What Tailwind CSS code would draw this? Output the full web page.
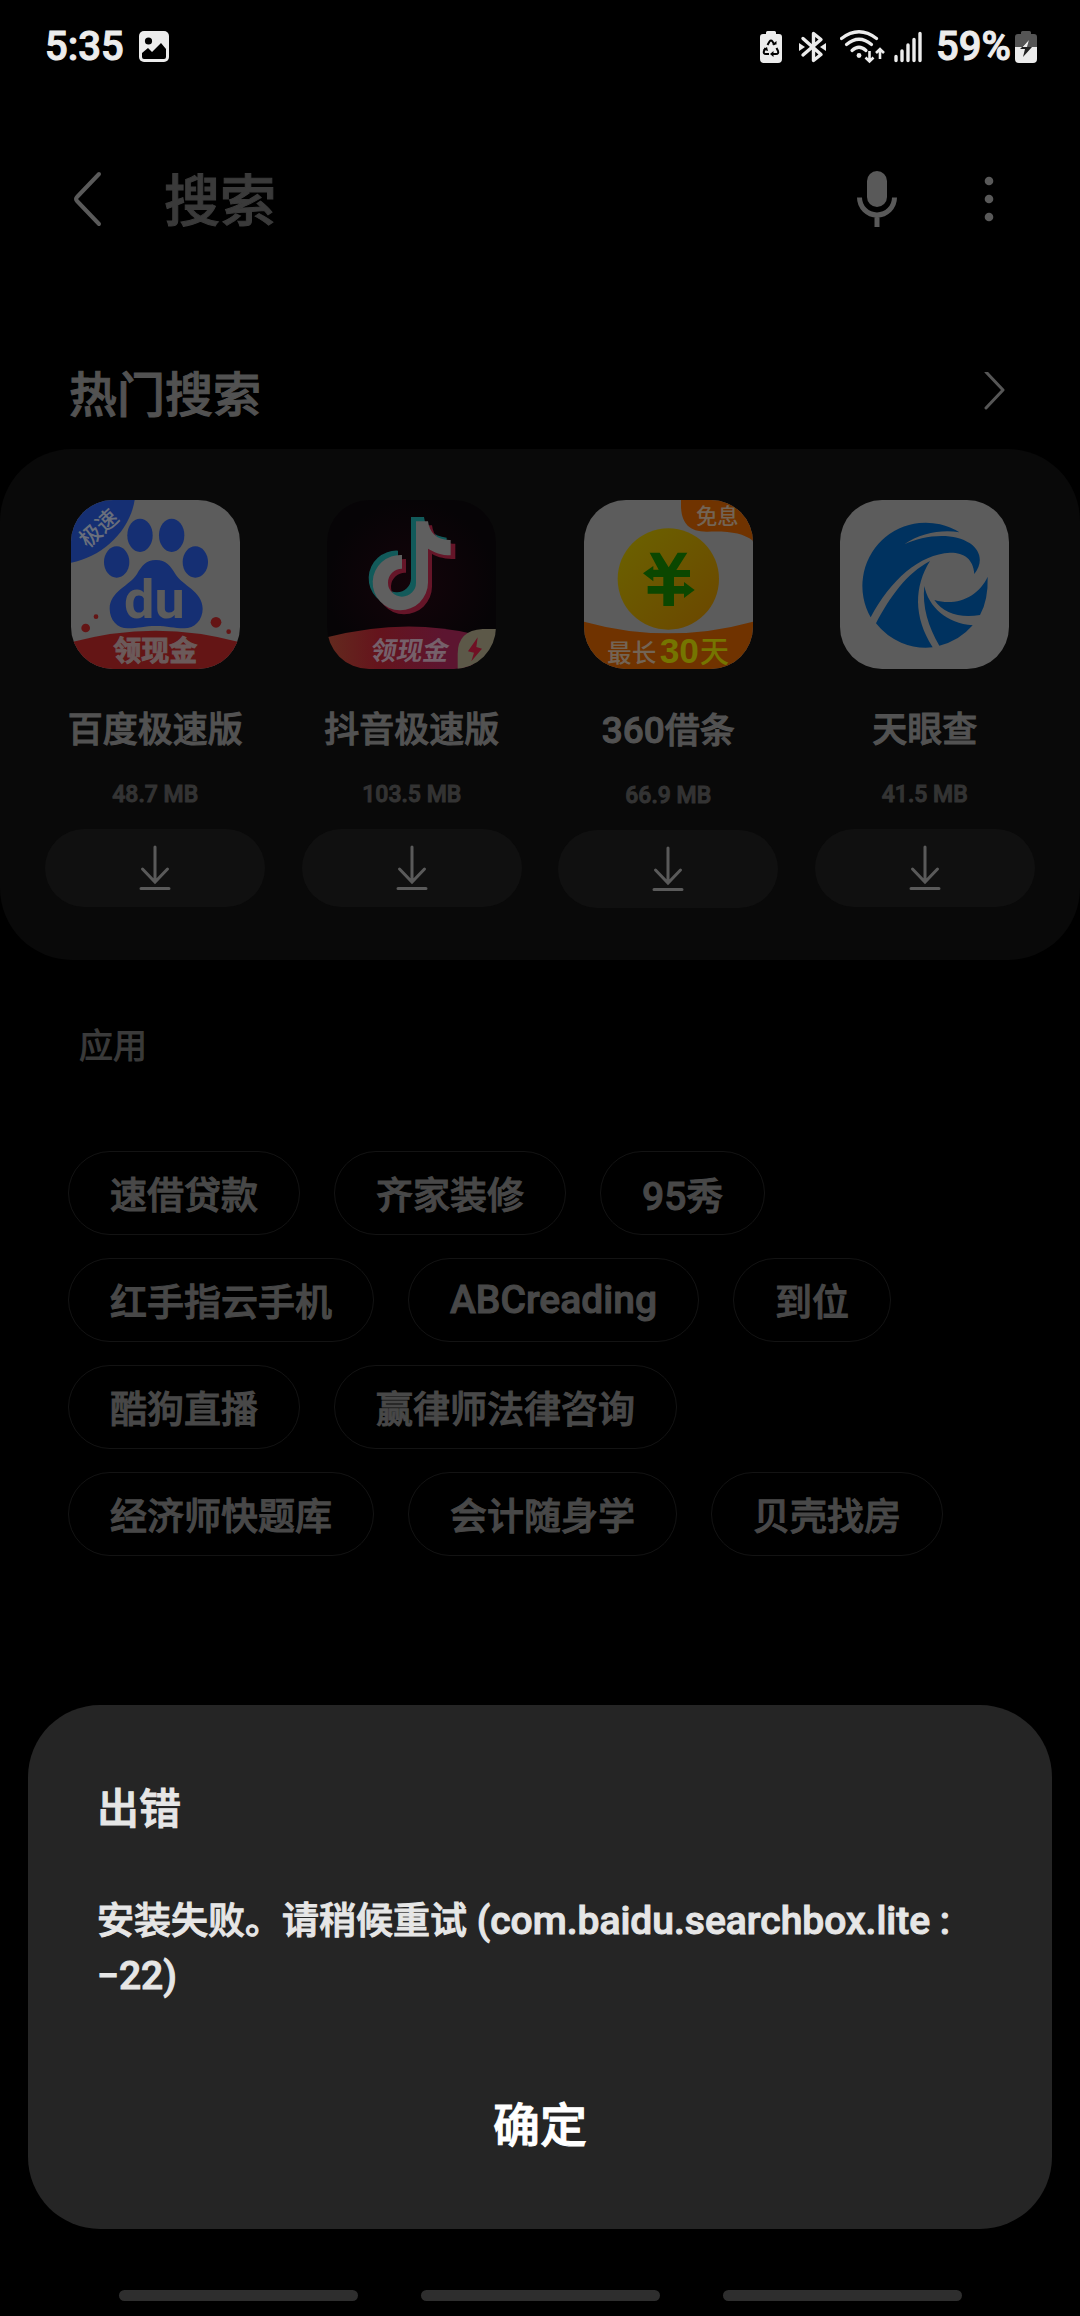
<!DOCTYPE html>
<html lang="zh-CN">
  <head>
    <meta charset="UTF-8" />
    <meta name="viewport" content="width=device-width, initial-scale=1.0" />
    <title>搜索</title>
    <script src="https://cdn.jsdelivr.net/npm/@tailwindcss/browser@4"></script>
  </head>
  <body
    class="bg-black min-h-screen font-medium font-[Roboto,'Noto_Sans_CJK_SC',sans-serif] [-webkit-text-stroke-width:1px]"
  >
    <!-- status bar -->
    <div class="flex items-center h-[94px] pl-[45px] pr-[43px] text-[#ececec]">
      <span class="text-[40px] leading-[48px]">5:35</span>
      <svg class="ml-[14px] w-8 h-8" viewBox="0 0 32 32">
        <rect x="1" y="0" width="30" height="31" rx="5" fill="#ececec" />
        <circle cx="10.5" cy="10" r="3.6" fill="#000" />
        <path d="M4 22l6-5 4 4 9-9 5 6v8a2 2 0 0 1-2 2H6a2 2 0 0 1-2-2z" fill="#000" />
      </svg>
      <div class="ml-auto flex items-center">
        <svg class="w-[22px] h-8" viewBox="0 0 22 32">
          <path d="M6 3V1.500Q6 0 7.500 0h7Q16 0 16 1.500V3h3q3 0 3 3v22q0 4-4 4H4q-4 0-4-4V6q0-3 3-3z" fill="#ececec" />
          <g fill="none" stroke="#000" stroke-width="2">
            <path d="M7.500 14 9.500 10.500q1.500-2 3 0L14.500 14" />
            <path d="M16.500 17l1.500 3q1 3-2 3h-4" />
            <path d="M5.500 17 4 20q-1 3 2 3h3" />
          </g>
          <path d="M12 13.500h4.500V10zM13.500 20v6l-3.500-3zM3 18.500l4-2.500 1 4z" fill="#000" />
        </svg>
        <svg class="ml-[17px] w-7 h-8" viewBox="0 0 28 32">
          <path d="M4 7.500 22 23.500 14.500 29.500V2.500L22 8.500 4 24" fill="none" stroke="#ececec" stroke-width="3.400" stroke-linejoin="round" stroke-linecap="round" />
          <path d="M0 12l6 4-6 4zM27 12l-6 4 6 4z" fill="#ececec" />
        </svg>
        <svg class="ml-[13px] w-[45px] h-[34px]" viewBox="0 0 45 34">
          <g fill="none" stroke="#ececec" stroke-width="3.200" stroke-linecap="round">
            <path d="M1.500 8.500Q19-5 36.500 8.500" />
            <path d="M6.500 14.500Q19 4 31.500 14.500" />
            <path d="M12 20.500Q19 14 26 20.500" />
          </g>
          <circle cx="19" cy="25.500" r="2.400" fill="#ececec" />
          <path d="M29.500 21v10M25.500 27.500l4 4 4-4M40 29V19M36 23l4-4 4 4" fill="none" stroke="#ececec" stroke-width="2.600" />
        </svg>
        <svg class="ml-[9px] w-7 h-8" viewBox="0 0 28 32">
          <path d="M2 25.500v4M8 20v9.500M14 14v15.500M20 8.500v21M26 2.500v27" stroke="#ececec" stroke-width="3.400" stroke-linecap="round" />
        </svg>
        <span class="ml-[14px] text-[40px] leading-[48px]">59%</span>
        <svg class="ml-1 w-[22px] h-8" viewBox="0 0 22 32">
          <path d="M6 3V1.500Q6 0 7.500 0h7Q16 0 16 1.500V3h3q3 0 3 3v10H0V6q0-3 3-3z" fill="#555" />
          <path d="M0 16h22v12q0 4-4 4H4q-4 0-4-4z" fill="#ececec" />
          <path d="M14 9 5 18h5l-2 8 9-10h-5z" fill="#222" />
          <path d="M14 9 7.500 16H12z" fill="#ececec" />
        </svg>
      </div>
    </div>

    <!-- search bar -->
    <form class="mt-[45px] flex items-center h-[120px] pl-[52px] pr-[55px]">
      <button type="button" aria-label="返回" class="w-[72px] h-[72px] flex items-center justify-center">
        <svg class="w-8 h-14" viewBox="0 0 32 56" fill="none" stroke="#5a5a5a" stroke-width="4" stroke-linecap="round" stroke-linejoin="round">
          <path d="M27 3 5 26q-2 2 0 4l22 23" />
        </svg>
      </button>
      <input
        type="text"
        aria-label="搜索"
        placeholder="搜索"
        class="ml-[40px] min-w-0 flex-1 h-[90px] pt-[6px] text-[56px] text-[#5a5a5a] placeholder:text-[#3a3a3a] bg-transparent outline-none"
      />
      <button type="button" aria-label="语音搜索" class="w-[72px] h-[72px] flex items-center justify-center">
        <svg class="w-10 h-14" viewBox="0 0 40 56">
          <rect x="10" y="0" width="20" height="36" rx="10" fill="#595959" />
          <path d="M2.500 26.500a17.500 17.500 0 0 0 35 0M20 44v12" fill="none" stroke="#595959" stroke-width="5" />
        </svg>
      </button>
      <button type="button" aria-label="更多" class="ml-[40px] w-[72px] h-[72px] flex items-center justify-center">
        <svg class="w-3 h-12" viewBox="0 0 12 48" fill="#595959">
          <circle cx="6" cy="6" r="4.300" />
          <circle cx="6" cy="24" r="4.300" />
          <circle cx="6" cy="42" r="4.300" />
        </svg>
      </button>
    </form>

    <!-- hot searches -->
    <div class="mt-[76px] flex items-center justify-between h-[114px] pl-[69px] pr-[73px]">
      <h2 class="pt-2 text-[48px] leading-[56px] text-[#525252]">热门搜索</h2>
      <a href="#" aria-label="更多热门搜索">
        <svg class="w-6 h-10" viewBox="0 0 24 40" fill="none" stroke="#565656" stroke-width="3" stroke-linecap="round" stroke-linejoin="round">
          <path d="M3 0l17 18L3 36" />
        </svg>
      </a>
    </div>

    <div class="grid grid-cols-4 rounded-[72px] bg-[#090909] px-[27px] pt-[51px] pb-[52px]">
      <div class="flex flex-col items-center">
        <svg class="w-[169px] h-[169px] rounded-[42px]" viewBox="93 60 507 507">
          <rect x="93" y="60" width="507" height="507" fill="#5c5c5c" />
          <g fill="#152f73">
            <path d="M93 60h191C270 150 190 230 93 248z" />
            <ellipse cx="300" cy="166" rx="38" ry="50" />
            <ellipse cx="395" cy="166" rx="38" ry="50" />
            <ellipse cx="230" cy="246" rx="38" ry="47" />
            <ellipse cx="466" cy="246" rx="38" ry="47" />
            <path d="M348 240c30 0 44 18 58 42 20 34 82 52 82 104 0 34-24 59-56 59-30 0-50-7-84-7s-54 7-84 7c-32 0-55-25-55-59 0-52 62-70 82-104 14-24 27-42 57-42z" />
          </g>
          <text x="343" y="415" text-anchor="middle" font-family="Roboto" font-weight="bold" font-size="162" fill="#5c5c5c">du</text>
          <text x="172" y="140" transform="rotate(-42 172 140)" text-anchor="middle" dominant-baseline="central" font-family="Noto Sans CJK SC" font-size="66" fill="#6a6f7c">极速</text>
          <path d="M93 487Q347 417 600 487v80H93z" fill="#641515" />
          <g fill="#641515">
            <circle cx="137" cy="444" r="13" />
            <circle cx="168" cy="410" r="7" />
            <circle cx="528" cy="427" r="16" />
            <circle cx="566" cy="455" r="7" />
          </g>
          <text x="346" y="542" text-anchor="middle" font-family="Noto Sans CJK SC" font-weight="bold" font-size="84" fill="#6b5a5a" stroke="#6b5a5a" stroke-width="3">领现金</text>
        </svg>
        <p class="mt-[42px] text-[35px] leading-[40px] text-[#525252]">百度极速版</p>
        <p class="mt-[30px] text-[23px] leading-[28px] text-[#333]">48.7 MB</p>
        <button type="button" aria-label="下载百度极速版" class="mt-[20px] w-[220px] h-[78px] rounded-full bg-[#101010] flex items-center justify-center">
          <svg class="w-8 h-[46px]" viewBox="0 0 32 46" fill="none" stroke="#5a5a5a" stroke-width="3" stroke-linecap="round">
            <path d="M16 2v34M3.500 24 16 37 28.500 24M2 43.500h28" />
          </svg>
        </button>
      </div>

      <div class="flex flex-col items-center">
        <svg class="w-[169px] h-[169px] rounded-[42px]" viewBox="81 60 507 507">
          <defs>
            <radialGradient id="dyBg">
              <stop offset="0" stop-color="#14040a" />
              <stop offset="1" stop-color="#060406" />
            </radialGradient>
            <linearGradient id="dyBar">
              <stop offset="0" stop-color="#632a1e" />
              <stop offset="0.350" stop-color="#65141c" />
              <stop offset="0.800" stop-color="#5c1530" />
            </linearGradient>
          </defs>
          <rect x="81" y="60" width="507" height="507" fill="url(#dyBg)" />
          <path d="M333 111h39c4 34 28 58 68 62v40c-28 0-50-9-68-20v102a83 83 0 1 1-78-83v41a42 42 0 1 0 39 42z" fill="#125a5a" />
          <path d="M357 136h39c4 34 28 58 70 55v46c-28 0-52-4-70-15v98a83 83 0 1 1-78-83v41a42 42 0 1 0 39 42z" fill="#651528" />
          <path d="M348 124h36c4 34 28 58 68 56v46c-28 0-50-9-68-20v102a83 83 0 1 1-78-83v41a42 42 0 1 0 42 42z" fill="#5f5f5f" />
          <path d="M81 472Q312 412 520 462V567H81z" fill="url(#dyBar)" />
          <path d="M588 447h-40q-75 4-75 75v45h115z" fill="#5c5848" />
          <path d="M533 472l-29 42 18 4-8 26 32-38-17-5z" fill="#701024" />
          <text x="208" y="540" transform="translate(96 0) skewX(-10)" font-family="Noto Sans CJK SC" font-weight="bold" font-size="78" fill="#75606a">领现金</text>
        </svg>
        <p class="mt-[42px] text-[35px] leading-[40px] text-[#525252]">抖音极速版</p>
        <p class="mt-[30px] text-[23px] leading-[28px] text-[#333]">103.5 MB</p>
        <button type="button" aria-label="下载抖音极速版" class="mt-[20px] w-[220px] h-[78px] rounded-full bg-[#101010] flex items-center justify-center">
          <svg class="w-8 h-[46px]" viewBox="0 0 32 46" fill="none" stroke="#5a5a5a" stroke-width="3" stroke-linecap="round">
            <path d="M16 2v34M3.500 24 16 37 28.500 24M2 43.500h28" />
          </svg>
        </button>
      </div>

      <div class="flex flex-col items-center">
        <svg class="w-[169px] h-[169px] rounded-[42px]" viewBox="69 60 507 507">
          <defs>
            <linearGradient id="coin" x1="0" y1="0" x2="1" y2="1">
              <stop offset="0" stop-color="#6b6300" />
              <stop offset="1" stop-color="#6b4600" />
            </linearGradient>
          </defs>
          <rect x="69" y="60" width="507" height="507" fill="#5c5c5c" />
          <path d="M360 60v20c2 50 25 76 80 75 70-2 105 5 136 27V60z" fill="#703300" />
          <circle cx="322" cy="297" r="152" fill="url(#coin)" />
          <path d="M266 218h30l27 44 27-44h29l-33 52h41v21h-48v27h30v-12l32 24-32 24v-13h-30v37h-32v-37h-47v-23h47v-27h-30v13l-31-24 31-22v11h16z" fill="#0b4700" />
          <path d="M69 425Q322 495 576 425v142H69z" fill="#703300" />
          <text x="405" y="131" font-family="Noto Sans CJK SC" font-size="64" fill="#736455">免息</text>
          <text x="138" y="545" font-family="Noto Sans CJK SC" font-size="74" font-weight="500" fill="#736455">最长</text>
          <text x="296" y="549" font-family="Liberation Sans" font-size="106" font-weight="bold" fill="#757500">30</text>
          <text x="416" y="545" font-family="Noto Sans CJK SC" font-size="88" font-weight="500" fill="#757500">天</text>
        </svg>
        <p class="mt-[42px] text-[35px] leading-[40px] text-[#525252]"><span class="text-[37px]">360</span>借条</p>
        <p class="mt-[30px] text-[23px] leading-[28px] text-[#333]">66.9 MB</p>
        <button type="button" aria-label="下载360借条" class="mt-[20px] w-[220px] h-[78px] rounded-full bg-[#101010] flex items-center justify-center">
          <svg class="w-8 h-[46px]" viewBox="0 0 32 46" fill="none" stroke="#5a5a5a" stroke-width="3" stroke-linecap="round">
            <path d="M16 2v34M3.500 24 16 37 28.500 24M2 43.500h28" />
          </svg>
        </button>
      </div>

      <div class="flex flex-col items-center">
        <svg class="w-[169px] h-[169px] rounded-[42px]" viewBox="60 60 507 507">
          <rect x="60" y="60" width="507" height="507" fill="#5c5c5c" />
          <g fill="#00325f">
            <path d="M152 412A190 190 0 0 1 418 157C370 148 300 158 253 193C310 165 400 155 450 190C485 215 488 250 463 282C460 235 430 217 390 218C300 222 210 300 152 412z" />
            <path d="M168 430C210 350 260 280 330 243C282 320 280 410 338 502A190 190 0 0 1 168 430z" />
            <path d="M313 318C325 380 380 430 458 436A190 190 0 0 1 358 497C325 440 306 380 313 318z" />
            <path d="M343 360C410 380 475 350 503 290Q505 360 480 405C420 415 370 400 343 360z" />
          </g>
        </svg>
        <p class="mt-[42px] text-[35px] leading-[40px] text-[#525252]">天眼查</p>
        <p class="mt-[30px] text-[23px] leading-[28px] text-[#333]">41.5 MB</p>
        <button type="button" aria-label="下载天眼查" class="mt-[20px] w-[220px] h-[78px] rounded-full bg-[#101010] flex items-center justify-center">
          <svg class="w-8 h-[46px]" viewBox="0 0 32 46" fill="none" stroke="#5a5a5a" stroke-width="3" stroke-linecap="round">
            <path d="M16 2v34M3.500 24 16 37 28.500 24M2 43.500h28" />
          </svg>
        </button>
      </div>
    </div>

    <!-- app suggestions -->
    <h3 class="mt-[66px] pl-[79px] text-[34px] leading-[40px] font-normal text-[#3a3a3a]">应用</h3>
    <div class="mt-[85px] flex flex-wrap gap-x-[34px] gap-y-[23px] px-[68px] text-[37px] leading-[44px] text-[#484848]">
      <button type="button" class="h-[84px] px-[41px] pt-2 rounded-full border border-[#131313]">速借贷款</button>
      <button type="button" class="h-[84px] px-[41px] pt-2 rounded-full border border-[#131313]">齐家装修</button>
      <button type="button" class="h-[84px] px-[41px] pt-2 rounded-full border border-[#131313]"><span class="text-[39px]">95</span>秀</button>
      <button type="button" class="h-[84px] px-[41px] pt-2 rounded-full border border-[#131313]">红手指云手机</button>
      <button type="button" class="h-[84px] px-[41px] rounded-full border border-[#131313] text-[39px]">ABCreading</button>
      <button type="button" class="h-[84px] px-[41px] pt-2 rounded-full border border-[#131313]">到位</button>
      <button type="button" class="h-[84px] px-[41px] pt-2 rounded-full border border-[#131313]">酷狗直播</button>
      <button type="button" class="h-[84px] px-[41px] pt-2 rounded-full border border-[#131313]">赢律师法律咨询</button>
      <button type="button" class="h-[84px] px-[41px] pt-2 rounded-full border border-[#131313]">经济师快题库</button>
      <button type="button" class="h-[84px] px-[41px] pt-2 rounded-full border border-[#131313]">会计随身学</button>
      <button type="button" class="h-[84px] px-[41px] pt-2 rounded-full border border-[#131313]">贝壳找房</button>
    </div>

    <!-- error dialog -->
    <div
      role="alertdialog"
      aria-labelledby="dialog-title"
      class="fixed inset-x-7 bottom-[87px] rounded-[72px] bg-[#252525] px-[69px] pt-[79px] pb-[63px] text-[#e6e6e6]"
    >
      <h1 id="dialog-title" class="text-[42px] leading-[52px]">出错</h1>
      <p class="mt-[58px] text-[37px] leading-[54px]">
        安装失败。请稍候重试<span class="text-[39px]"> (com.baidu.searchbox.lite : <br />−22)</span>
      </p>
      <button type="button" class="mt-[82px] w-full h-[80px] text-[47px] text-white">确定</button>
    </div>

    <!-- gesture bars -->
    <div class="fixed inset-x-0 bottom-[15px] flex justify-center gap-[63px]">
      <span class="w-[239px] h-[11px] rounded-full bg-[#2e2e2e]"></span>
      <span class="w-[239px] h-[11px] rounded-full bg-[#2e2e2e]"></span>
      <span class="w-[239px] h-[11px] rounded-full bg-[#2e2e2e]"></span>
    </div>
  </body>
</html>
